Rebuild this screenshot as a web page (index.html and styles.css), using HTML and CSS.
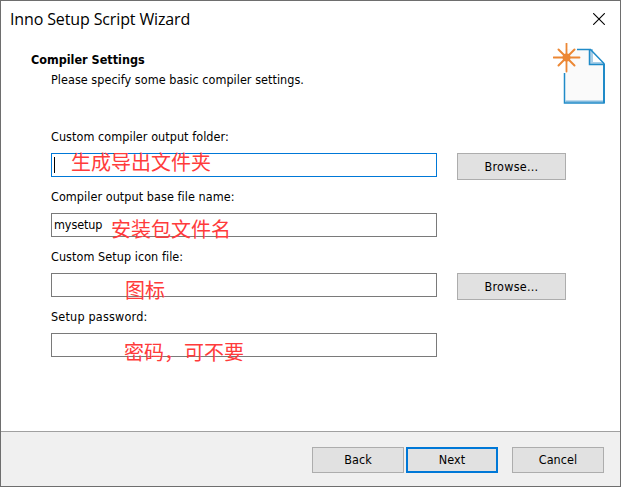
FILE: index.html
```html
<!DOCTYPE html>
<html lang="en">
<head>
<meta charset="utf-8">
<title>Inno Setup Script Wizard</title>
<link rel="stylesheet" href="styles.css">
</head>
<body>
<main class="window">
  <header class="titlebar">
    <span class="title">Inno Setup Script Wizard</span>
    <svg class="close" width="12" height="12" viewBox="0 0 12 12"><path d="M.2.2 11.8 11.8M11.8.2.2 11.8" stroke="#000" stroke-width="1.1"/></svg>
  </header>
  <section class="intro">
    <div>
      <h1>Compiler Settings</h1>
      <p class="t-desc">Please specify some basic compiler settings.</p>
    </div>
    <svg class="logo" width="54" height="62" viewBox="0 0 54 62">
      <path d="M12 32V6h25l14 15v38H12z" fill="#fafafa"/>
      <path d="M37 7v14h14z" fill="#fff"/>
      <path d="M37 6h3v15h-3z" fill="#a9cfe8"/>
      <path d="M37 19h13v2H37z" fill="#a9cfe8"/>
      <path d="M12.5 57.500h38v2h-38z" fill="#82bade"/>
      <path d="M11.500 30v30H51V20.500L37.500 6.500H24M36.500 6v15.500H51" fill="none" stroke="#208bc8" stroke-width="1.5"/>
      <path d="M51 21v39" stroke="#208bc8" stroke-width="2"/>
      <g stroke="#ec8734" stroke-linecap="round">
        <path d="M13.500 .5v28M.5 14.500h26" stroke-width="1.8"/>
        <path d="m5.500 6.500 16 16M21.500 6.500l-16 16" stroke-width="2"/>
      </g>
      <circle cx="13.500" cy="14.500" r="4" fill="#ec8734"/>
    </svg>
  </section>
  <section class="form">
    <div class="row">
      <label class="t-folder">Custom compiler output folder:</label>
      <div class="controls">
        <div class="field focused"><i class="caret"></i><span class="note n-folder">生成导出文件夹</span></div>
        <button class="browse">Browse...</button>
      </div>
    </div>
    <div class="row">
      <label class="t-name">Compiler output base file name:</label>
      <div class="controls">
        <div class="field"><span class="value">mysetup</span><span class="note n-name">安装包文件名</span></div>
      </div>
    </div>
    <div class="row">
      <label class="t-icon">Custom Setup icon file:</label>
      <div class="controls">
        <div class="field"><span class="note n-icon">图标</span></div>
        <button class="browse">Browse...</button>
      </div>
    </div>
    <div class="row">
      <label class="t-pass">Setup password:</label>
      <div class="controls">
        <div class="field"><span class="note n-pass">密码，可不要</span></div>
      </div>
    </div>
  </section>
  <footer class="actions">
    <button>Back</button>
    <button class="primary">Next</button>
    <button class="cancel">Cancel</button>
  </footer>
</main>
</body>
</html>
```
FILE: styles.css
```css
* { box-sizing: border-box; }
body { margin: 0; }
.window {
  width: 621px;
  height: 487px;
  display: flex;
  flex-direction: column;
  border: 1px solid #6e6e6e;
  background: #fff;
  color: #000;
  font: 12.5px/16px "DejaVu Sans Condensed", "DejaVu Sans", sans-serif;
  white-space: nowrap;
}
.titlebar {
  height: 36px;
  padding: 0 15px 0 9px;
  display: flex;
  align-items: center;
  justify-content: space-between;
}
.title {
  font: 16px/22px "Open Sans", "Noto Sans", sans-serif;
  letter-spacing: -0.13px;
}
.close { display: block; }
.intro {
  height: 91px;
  padding: 6px 13px 0 30px;
  display: flex;
  justify-content: space-between;
}
h1 { margin: 9px 0 4px; font-size: 12.5px; line-height: 16px; font-weight: bold; }
.intro p { margin: 0 0 0 20px; letter-spacing: 0.04px; }
.form { flex: 1; padding-left: 50px; }
.row { height: 60px; }
.row label { display: block; height: 25px; line-height: 18px; letter-spacing: 0.06px; }
.row .t-pass { letter-spacing: 0.2px; }
.controls { display: flex; gap: 20px; align-items: flex-start; }
.field {
  position: relative;
  width: 386px;
  height: 24px;
  padding-left: 2px;
  border: 1px solid #7a7a7a;
  display: flex;
  align-items: center;
}
.value { letter-spacing: -0.1px; }
.focused { border-color: #0078d7; }
.caret { width: 1px; height: 16px; background: #000; margin-top: -1px; }
.note {
  position: absolute;
  color: #ff3b3b;
  font: 400 20px/24px "Noto Sans CJK SC", sans-serif;
}
.n-folder { left: 19px; top: -4px; }
.n-name { left: 59px; top: 3px; }
.n-icon { left: 73px; top: 4px; }
.n-pass { left: 72px; top: 6px; }
button {
  width: 92px;
  height: 26px;
  padding: 0;
  border: 1px solid #adadad;
  background: #e1e1e1;
  color: #000;
  font: inherit;
  letter-spacing: 0.08px;
}
.browse { width: 109px; height: 27px; letter-spacing: 0.25px; }
.primary { border: 2px solid #0078d7; }
.actions {
  height: 55px;
  padding: 15px 16px 0 0;
  border-top: 1px solid #a0a0a0;
  background: #f0f0f0;
  display: flex;
  justify-content: flex-end;
  gap: 2px;
}
.cancel { margin-left: 12px; }
```
